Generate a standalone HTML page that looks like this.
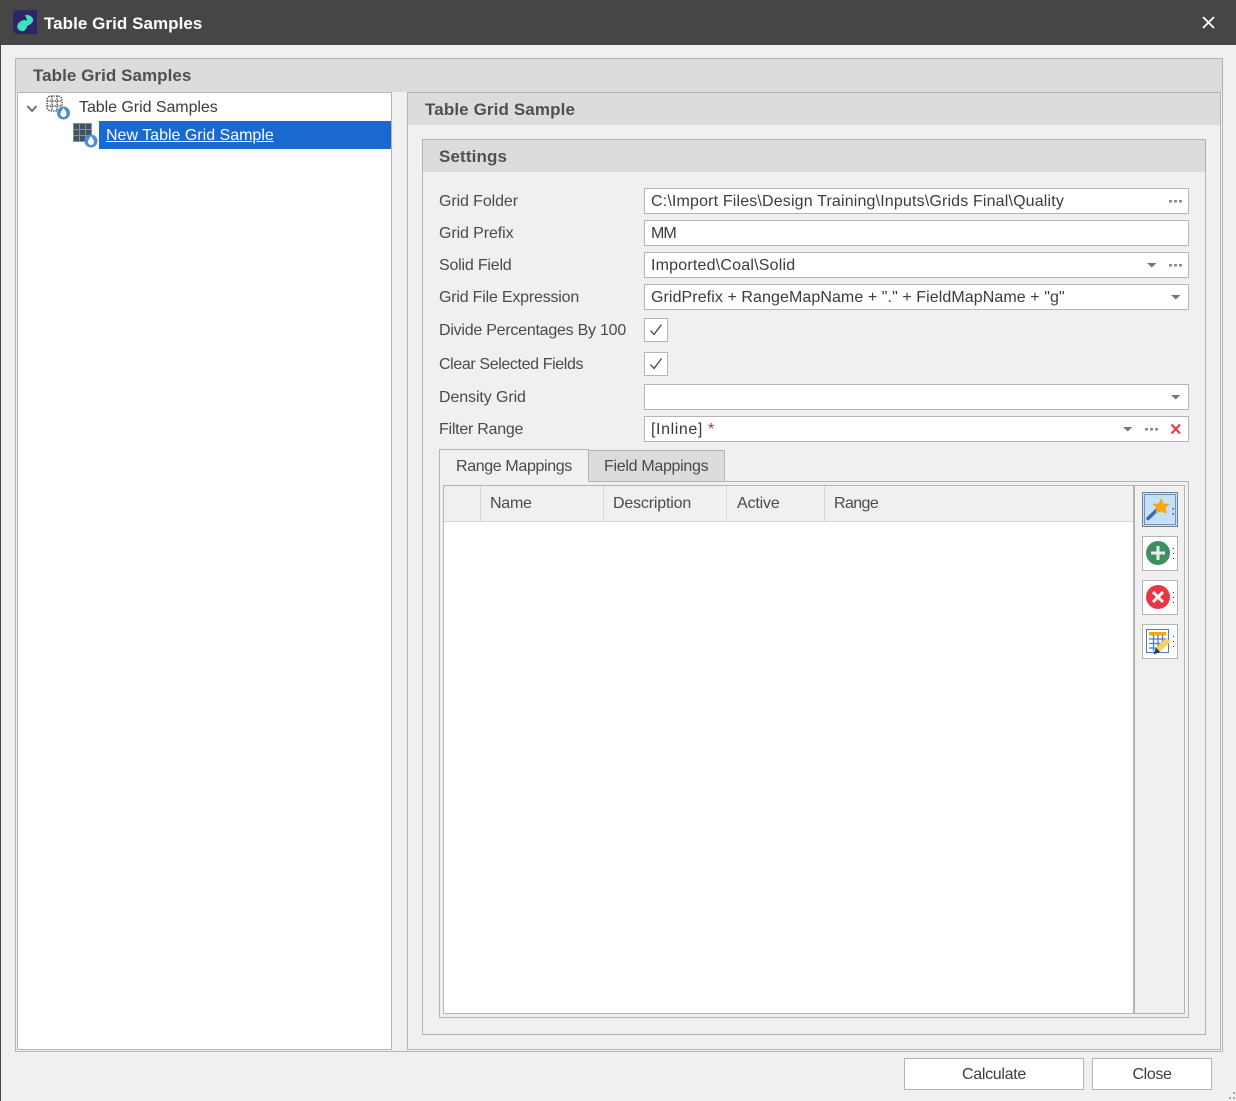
<!DOCTYPE html>
<html><head><meta charset="utf-8"><style>
html,body{margin:0;padding:0}
body{width:1236px;height:1101px;overflow:hidden;position:relative;background:#f0f0f0;font-family:"Liberation Sans",sans-serif;font-size:16px;color:#4a4a4a}
div,svg{position:absolute;box-sizing:border-box}
.b{border:1px solid #b4b4b4}
.h{background:#dcdcdc}
.t{white-space:nowrap;line-height:20px;height:20px}
.bold{font-weight:bold;font-size:17px;color:#505050}
.f{left:644px;width:545px;height:26px;background:#fff;border:1px solid #b4b4b4;padding-left:6px;line-height:26px;white-space:nowrap;color:#3c3c3c}
.l{left:439px}
.tb{left:1142px;width:36px;height:35px;background:#fff;border:1px solid #b4b4b4}
.cb{left:644px;width:24px;height:24px;background:#fff;border:1px solid #b4b4b4}
.btn{background:#fff;border:1px solid #b4b4b4;text-align:center;line-height:32px;color:#3c3c3c;height:32px;top:1058px}
.s{background:#d8d8d8;width:1px;top:486px;height:35px}
</style></head><body>
<div style="left:0;top:0;width:1236px;height:45px;background:#464646"></div>
<div style="left:0;top:45px;width:1px;height:1056px;background:#464646"></div>
<svg style="left:13px;top:10px" width="24" height="24" viewBox="0 0 24 24"><path d="M3 0H24V24H3L0 21V3Z" fill="#2e2566"/><path d="M12 5C17 4 21 8 20 11C19 14 16 15 14 16C14 19 11 22 8 21C5 20 3 17 5 14C6 12 9 10 12 10L14 11C14 9 13 7 12 5Z" fill="#3fe0c0"/></svg>
<div class="t" style="left:44px;top:14px;color:#fff;font-weight:bold;font-size:17px;letter-spacing:.05px">Table Grid Samples</div>
<svg style="left:1201px;top:15px" width="15" height="15"><path d="M2 2L13 13M13 2L2 13" stroke="#fff" stroke-width="1.8"/></svg>

<div class="b" style="left:15px;top:58px;width:1208px;height:994px;background:#f0f0f0"></div>
<div class="h" style="left:16px;top:59px;width:1206px;height:33px"></div>
<div class="t bold" style="left:33px;top:66px;letter-spacing:.05px">Table Grid Samples</div>

<div class="b" style="left:17px;top:92px;width:375px;height:958px;background:#fff"></div>
<svg style="left:26px;top:104px" width="12" height="10"><path d="M1.5 2L6 7L10.5 2" fill="none" stroke="#666" stroke-width="1.8"/></svg>
<svg style="left:45px;top:94px" width="28" height="26" viewBox="0 0 28 26"><g fill="none" stroke="#444" stroke-width="1.3" stroke-dasharray="1.5 1"><rect x="2" y="2" width="15" height="15" rx="4"/><path d="M2 7H17M2 12H17M7 2V17M12 2V17"/></g><circle cx="18.500" cy="19" r="6.500" fill="#4a90d0"/><path d="M18.500 14C16.500 17 15.500 18.300 15.500 20A3 3 0 0 0 21.500 20C21.500 18.300 20.500 17 18.500 14Z" fill="#fff"/></svg>
<div class="t" style="left:79px;top:98px;color:#3c3c3c;letter-spacing:-.05px">Table Grid Samples</div>
<svg style="left:72px;top:122px" width="27" height="26" viewBox="0 0 27 26"><rect x="1" y="1" width="19" height="19" fill="#8a8f94"/><path d="M2 2h5v5H2zM8 2h5v5H8zM14 2h5v5h-5zM2 8h5v5H2zM8 8h5v5H8zM14 8h5v5h-5zM2 14h5v5H2zM8 14h5v5H8zM14 14h5v5h-5z" fill="#3e5568"/><circle cx="19" cy="19" r="6.500" fill="#4a90d0"/><path d="M19 14C17 17 16 18.300 16 20A3 3 0 0 0 22 20C22 18.300 21 17 19 14Z" fill="#fff"/></svg>
<div style="left:99px;top:121px;width:292px;height:28px;background:#1a69d0"></div>
<div class="t" style="left:106px;top:126px;color:#fff;text-decoration:underline">New Table Grid Sample</div>

<div class="b" style="left:407px;top:92px;width:814px;height:958px;background:#f0f0f0"></div>
<div class="h" style="left:408px;top:93px;width:812px;height:32px"></div>
<div class="t bold" style="left:425px;top:100px;letter-spacing:.12px">Table Grid Sample</div>

<div class="b" style="left:422px;top:139px;width:784px;height:896px;background:#f0f0f0"></div>
<div class="h" style="left:423px;top:140px;width:782px;height:32px"></div>
<div class="t bold" style="left:439px;top:147px;letter-spacing:.12px">Settings</div>

<div class="t l" style="top:192px;letter-spacing:-.1px">Grid Folder</div>
<div class="t l" style="top:224px;letter-spacing:-.1px">Grid Prefix</div>
<div class="t l" style="top:256px;letter-spacing:-.2px">Solid Field</div>
<div class="t l" style="top:288px;letter-spacing:-.2px">Grid File Expression</div>
<div class="t l" style="top:321px;letter-spacing:-.24px">Divide Percentages By 100</div>
<div class="t l" style="top:355px;letter-spacing:-.38px">Clear Selected Fields</div>
<div class="t l" style="top:388px;letter-spacing:-.1px">Density Grid</div>
<div class="t l" style="top:420px;letter-spacing:-.25px">Filter Range</div>

<div class="f" style="top:188px;letter-spacing:.16px">C:\Import Files\Design Training\Inputs\Grids Final\Quality</div>
<div class="f" style="top:220px;letter-spacing:-1px">MM</div>
<div class="f" style="top:252px;letter-spacing:.2px">Imported\Coal\Solid</div>
<div class="f" style="top:284px;letter-spacing:.08px">GridPrefix + RangeMapName + "." + FieldMapName + "g"</div>
<div class="cb" style="top:318px"></div>
<svg style="left:649px;top:323px" width="14" height="14"><path d="M1.5 7.500L5 11.500L12.500 1.500" fill="none" stroke="#444" stroke-width="1.3"/></svg>
<div class="cb" style="top:352px"></div>
<svg style="left:649px;top:357px" width="14" height="14"><path d="M1.500 7.500L5 11.500L12.500 1.500" fill="none" stroke="#444" stroke-width="1.3"/></svg>
<div class="f" style="top:384px"></div>
<div class="f" style="top:416px;letter-spacing:.6px">[Inline] <span style="color:#8a3a70">*</span></div>

<svg style="left:0;top:0" width="1236" height="460">
<g fill="#8a8a8a"><rect x="1169" y="200" width="3" height="2.500"/><rect x="1174" y="200" width="3" height="2.500"/><rect x="1179" y="200" width="3" height="2.500"/>
<rect x="1169" y="264" width="3" height="2.500"/><rect x="1174" y="264" width="3" height="2.500"/><rect x="1179" y="264" width="3" height="2.500"/>
<rect x="1145" y="428" width="3" height="2.500"/><rect x="1150" y="428" width="3" height="2.500"/><rect x="1155" y="428" width="3" height="2.500"/>
<path d="M1147 263h9.500l-4.750 4.500zM1171 295h9.500l-4.750 4.500zM1171 395h9.500l-4.750 4.500zM1123 427h9.500l-4.750 4.500z" fill="#777"/></g>
<path d="M1171.500 424.500L1180 433.500M1180 424.500L1171.500 433.500" stroke="#e83a4a" stroke-width="2.200"/>
</svg>

<div class="b" style="left:439px;top:481px;width:750px;height:537px;background:#f0f0f0"></div>
<div style="left:439px;top:449px;width:150px;height:33px;background:#f0f0f0;border:1px solid #b4b4b4;border-bottom:0"></div>
<div style="left:588px;top:450px;width:137px;height:32px;background:#dcdcdc;border:1px solid #b4b4b4"></div>
<div class="t" style="left:456px;top:457px;letter-spacing:-.36px">Range Mappings</div>
<div class="t" style="left:604px;top:457px;letter-spacing:-.3px">Field Mappings</div>

<div class="b" style="left:443px;top:485px;width:742px;height:529px;background:#f0f0f0"></div>
<div style="left:444px;top:521px;width:690px;height:492px;background:#fff;border-top:1px solid #d8d8d8"></div>
<div class="s" style="left:480px"></div><div class="s" style="left:603px"></div><div class="s" style="left:726px"></div><div class="s" style="left:824px"></div>
<div class="t" style="left:490px;top:494px;letter-spacing:-.25px">Name</div>
<div class="t" style="left:613px;top:494px;letter-spacing:-.18px">Description</div>
<div class="t" style="left:737px;top:494px;letter-spacing:-.17px">Active</div>
<div class="t" style="left:834px;top:494px;letter-spacing:-.6px">Range</div>
<div style="left:1133px;top:486px;width:2px;height:527px;background:#b4b4b4"></div>

<div class="tb" style="top:492px;background:#c4e0fc;border-color:#708090"></div>
<div class="tb" style="top:536px"></div>
<div class="tb" style="top:580px"></div>
<div class="tb" style="top:624px"></div>
<svg style="left:1142px;top:492px" width="36" height="168" viewBox="0 0 36 168">
<rect x="2.500" y="2.500" width="31" height="30" fill="none" stroke="#33415a" stroke-dasharray="1 1"/>
<path d="M6 26.500L16 17" stroke="#2f6fc0" stroke-width="3.600" stroke-linecap="round"/>
<path d="M19 6L21.500 11.500L27.500 12L23.500 16L25 22L19 19.500L13.500 21.500L14.500 16L10.500 12L16.500 11.500Z" fill="#f9a70f"/>
<g fill="#444"><rect x="30.500" y="16" width="1.500" height="1.500"/><rect x="30.500" y="21" width="1.500" height="1.500"/></g>
<circle cx="16" cy="61" r="12" fill="#3d9060"/><path d="M16 54V68M9 61H23" stroke="#e4f0e8" stroke-width="3"/>
<g fill="#333"><rect x="31" y="56" width="1" height="1"/><rect x="31" y="61" width="1" height="1"/><rect x="31" y="66" width="1" height="1"/></g>
<circle cx="16" cy="105" r="12" fill="#e83545"/><path d="M11 100L21 110M21 100L11 110" stroke="#fff" stroke-width="3"/>
<g fill="#333"><rect x="31" y="100" width="1" height="1"/><rect x="31" y="105" width="1" height="1"/><rect x="31" y="110" width="1" height="1"/></g>
<rect x="4.500" y="137.500" width="22" height="23" fill="#fff" stroke="#4a7cc0"/>
<rect x="7" y="140" width="17" height="3.500" fill="#f9a70f"/>
<path d="M7 147H24M7 151.500H22M7 156H17M11.500 143V159M16 143V159M20.500 143V153" stroke="#4a7cc0" stroke-width="1.300" fill="none"/>
<path d="M14 155.500L24.500 146L28.500 150L18 160Z" fill="#fbd060"/><path d="M14 155.500L11.500 162.500L18 160Z" fill="#33383f"/>
<g fill="#333"><rect x="31" y="144" width="1" height="1"/><rect x="31" y="149" width="1" height="1"/><rect x="31" y="154" width="1" height="1"/></g>
</svg>

<div class="btn" style="left:904px;width:180px;letter-spacing:-.3px">Calculate</div>
<div class="btn" style="left:1092px;width:120px;letter-spacing:-.4px">Close</div>
<svg style="left:1226px;top:1091px" width="10" height="10"><g fill="#aaa"><rect x="7" y="1" width="2" height="2"/><rect x="3" y="6" width="2" height="2"/><rect x="7" y="6" width="2" height="2"/></g></svg>
</body></html>
